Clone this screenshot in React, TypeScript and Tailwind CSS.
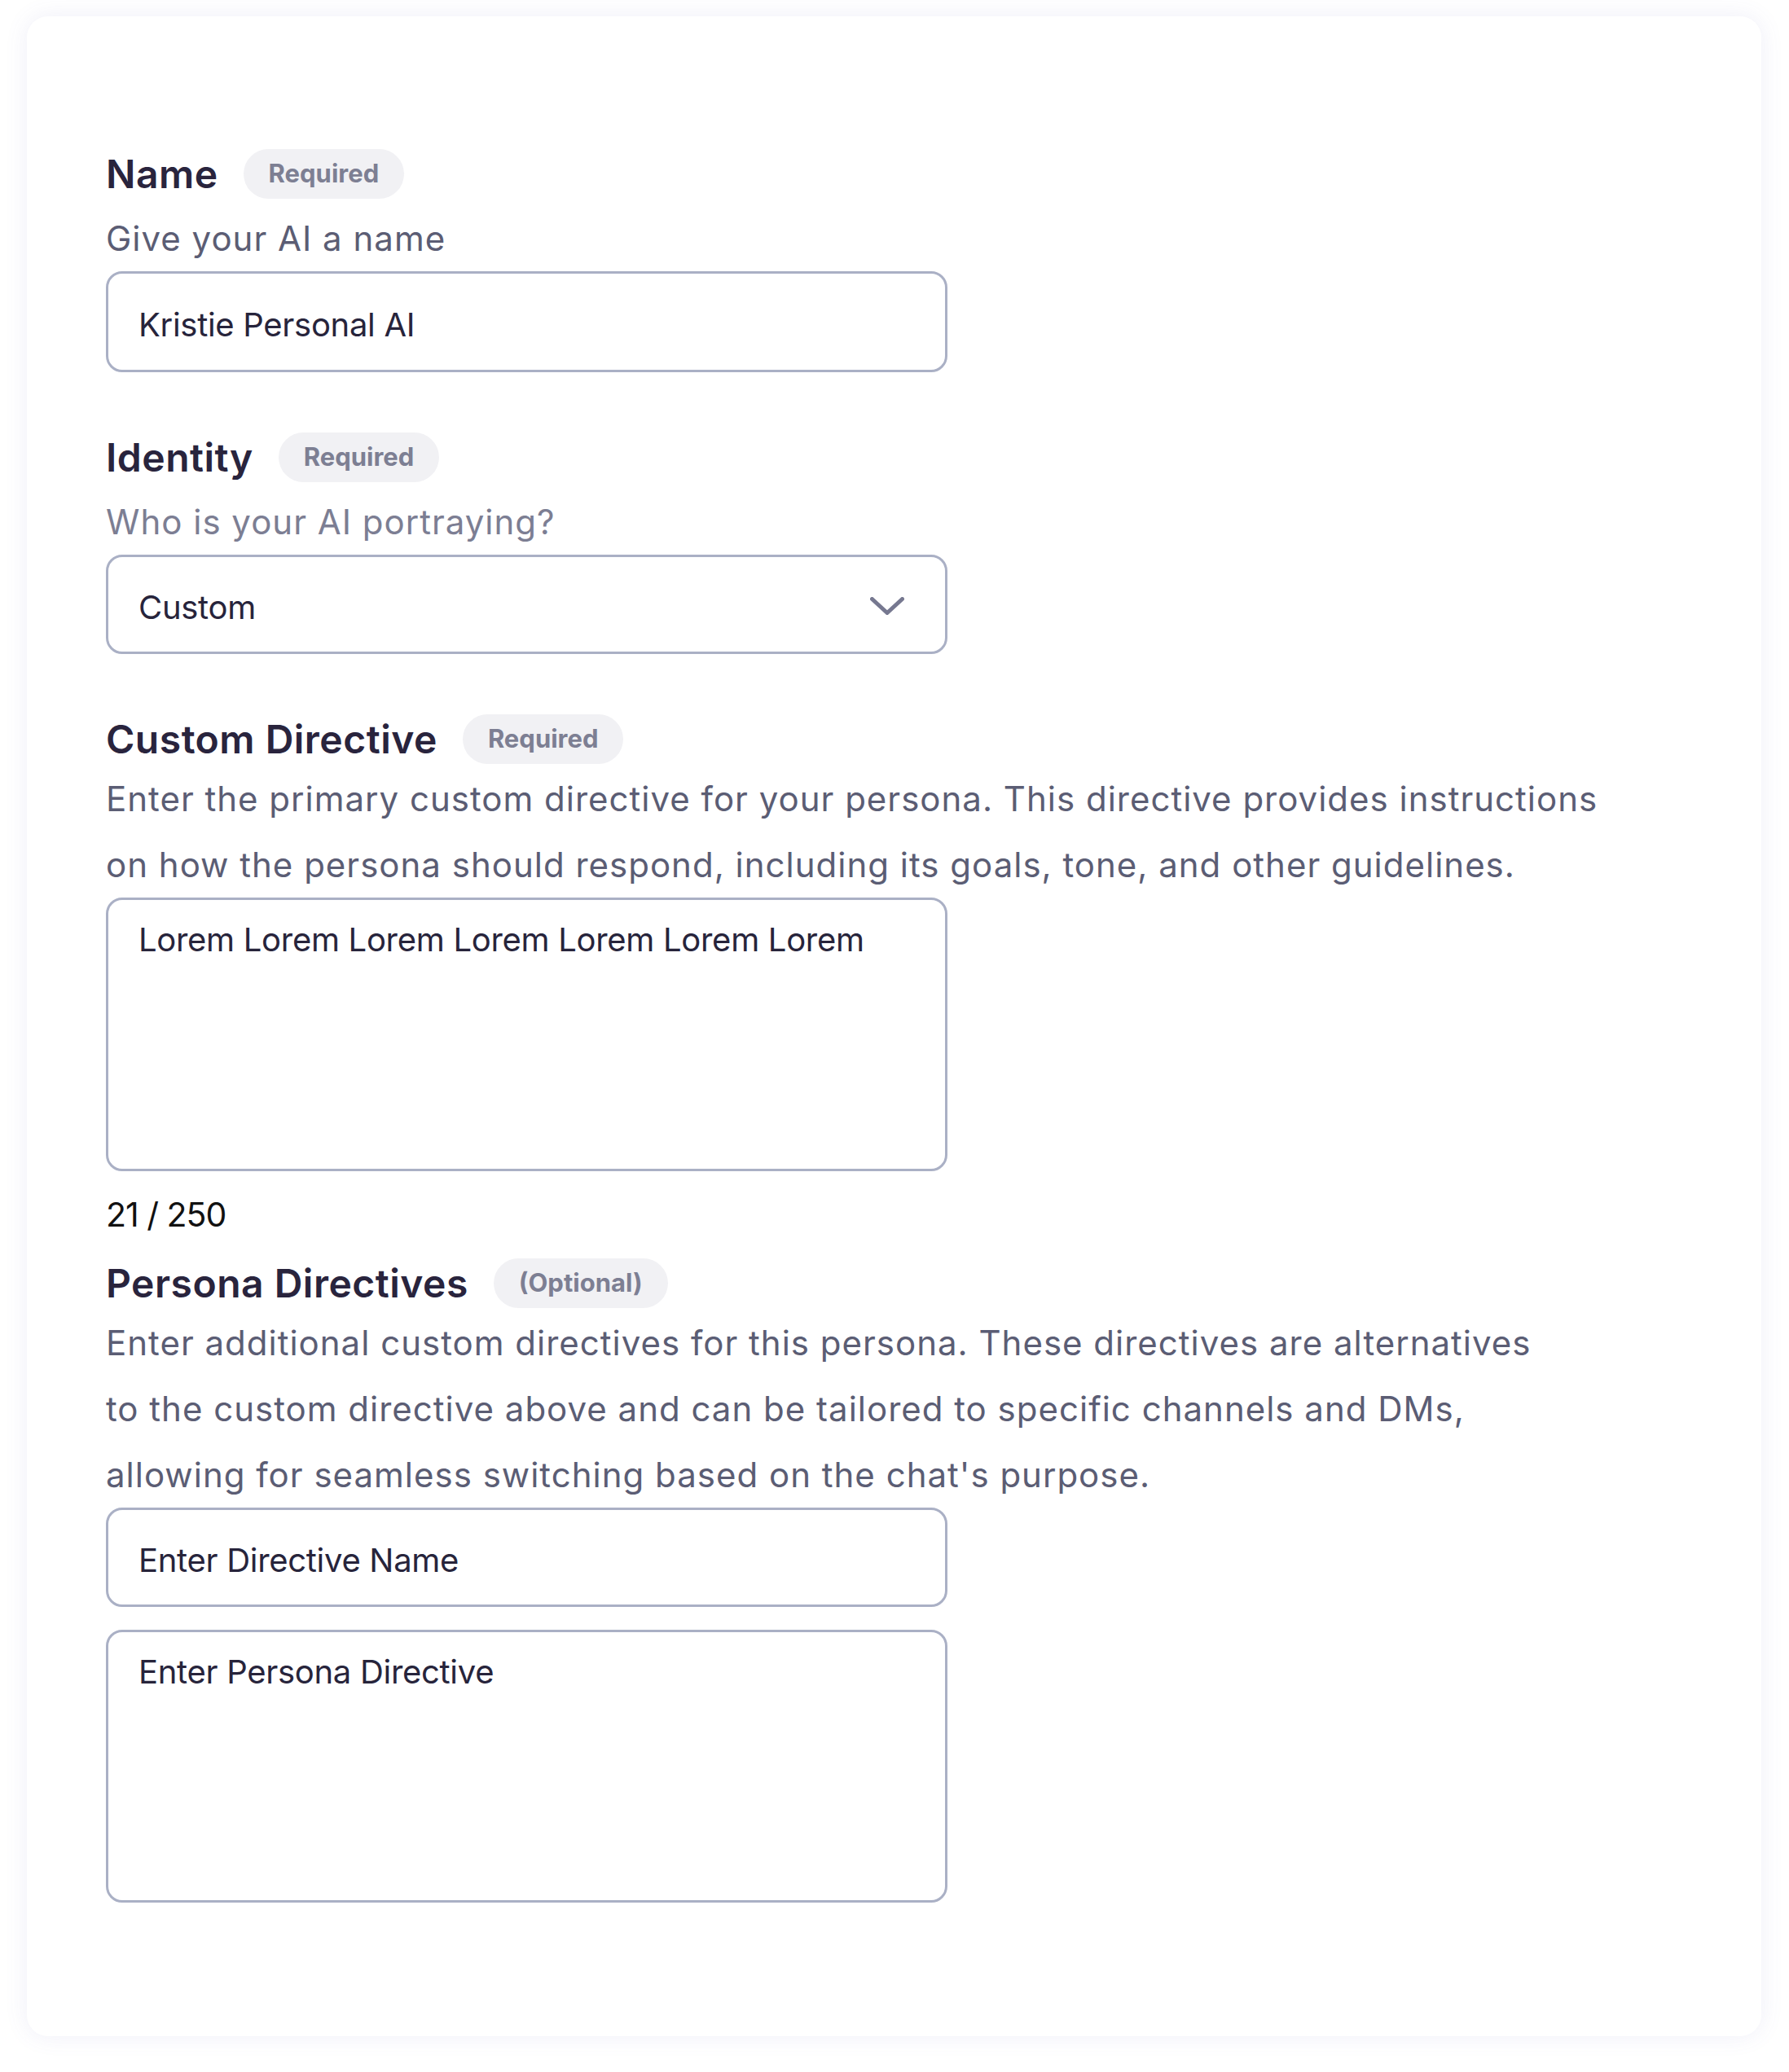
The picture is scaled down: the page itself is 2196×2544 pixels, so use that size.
import type { ReactNode } from 'react'

function Badge({ children }: { children: ReactNode }) {
  return (
    <span className="inline-flex h-[61px] items-center rounded-full bg-[#f1f1f4] px-[31px] text-[31px] font-bold text-[#7d7f93]">
      {children}
    </span>
  )
}

interface SectionProps {
  title: string
  badge: string
  lines: string[]
  muted?: boolean
  children: ReactNode
}

function Section({ title, badge, lines, muted, children }: SectionProps) {
  // single-line hints sit a bit lower under the title than the long ones
  const gap = lines.length > 1 ? 'mt-[2px]' : 'mt-[8px]'
  return (
    <section>
      <div className="flex h-[61px] items-center gap-[31px]">
        <h2 className="text-[48px] font-semibold leading-none tracking-[0.5px] text-[#29243d]">{title}</h2>
        <Badge>{badge}</Badge>
      </div>
      <p
        className={`${gap} text-[42px] leading-[81px] tracking-[1px] ${muted ? 'text-[#7c7e93]' : 'text-[#5b5d74]'}`}
      >
        {lines.map((line, i) => (
          <span key={i} className="block whitespace-nowrap">
            {line}
          </span>
        ))}
      </p>
      {children}
    </section>
  )
}

const fieldBase =
  'w-[1033px] rounded-[20px] border-[3px] border-[#aab0c5] bg-white px-[37px] text-[40px] tracking-[-0.3px] text-[#27243b] outline-none'

export default function App() {
  return (
    <div
      className="min-h-screen bg-white pb-[44px] pl-[33px] pr-[34px] pt-[20px]"
      style={{ fontFamily: 'Inter, "Noto Sans", sans-serif' }}
    >
      <div className="h-[2480px] rounded-[26px] bg-white pl-[97px] pt-[163px] shadow-[0_0_28px_rgba(96,96,190,0.10)]">
        <Section title="Name" badge="Required" lines={['Give your AI a name']}>
          <input
            className={`${fieldBase} h-[124px] pt-[7px]`}
            defaultValue="Kristie Personal AI"
          />
        </Section>

        <div className="mt-[74px]">
          <Section
            title="Identity"
            badge="Required"
            lines={['Who is your AI portraying?']}
            muted
          >
            <div className={`${fieldBase} flex h-[122px] items-center justify-between pr-[50px]`}>
              <span className="mt-[8px]">Custom</span>
              <svg width="42" height="22" viewBox="0 0 42 22" fill="none" className="mt-[3px]">
                <path
                  d="M2.5 2.5 L21 19.5 L39.5 2.5"
                  stroke="#767890"
                  strokeWidth="5"
                  strokeLinecap="round"
                  strokeLinejoin="round"
                />
              </svg>
            </div>
          </Section>
        </div>

        <div className="mt-[74px]">
          <Section
            title="Custom Directive"
            badge="Required"
            lines={[
              'Enter the primary custom directive for your persona. This directive provides instructions',
              'on how the persona should respond, including its goals, tone, and other guidelines.',
            ]}
          >
            <textarea
              className={`${fieldBase} block h-[336px] resize-none py-[19px] leading-[60px]`}
              defaultValue="Lorem Lorem Lorem Lorem Lorem Lorem Lorem"
            />
          </Section>
          <p className="mt-[22px] text-[41px] leading-[62px] tracking-[-1px] text-[#111]">21 / 250</p>
        </div>

        <div className="mt-[23px]">
          <Section
            title="Persona Directives"
            badge="(Optional)"
            lines={[
              'Enter additional custom directives for this persona. These directives are alternatives',
              'to the custom directive above and can be tailored to specific channels and DMs,',
              "allowing for seamless switching based on the chat's purpose.",
            ]}
          >
            <input
              className={`${fieldBase} h-[122px] pt-[7px] placeholder:text-[#27243b]`}
              placeholder="Enter Directive Name"
            />
            <textarea
              className={`${fieldBase} mt-[28px] block h-[335px] resize-none py-[19px] leading-[60px] placeholder:text-[#27243b]`}
              placeholder="Enter Persona Directive"
            />
          </Section>
        </div>
      </div>
    </div>
  )
}
